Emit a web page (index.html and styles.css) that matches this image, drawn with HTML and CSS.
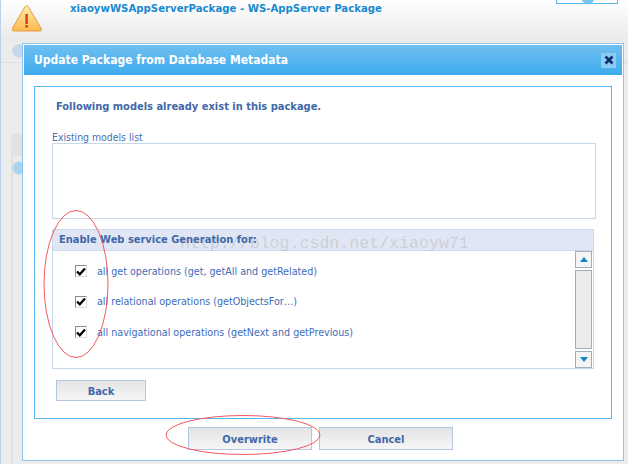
FILE: index.html
```html
<!DOCTYPE html>
<html>
<head>
<meta charset="utf-8">
<title>Update Package</title>
<link rel="stylesheet" href="styles.css">
</head>
<body>
<div class="page">
  <header class="top">
    <svg class="warn" width="30" height="28" viewBox="0 0 30 28"><defs><linearGradient id="w" x1="0" y1="0" x2="0" y2="1"><stop offset="0" stop-color="#fff0a8"/><stop offset="1" stop-color="#fbb84e"/></linearGradient></defs><path d="M13 1.5 Q14.5 -.3 16 1.5 L29 23.5 Q30 26 27.5 26 L1.5 26 Q-1 26 0 23.5 Z" transform="translate(.2 0)" fill="url(#w)" stroke="#e59a4c"/><rect x="13.4" y="9" width="2.4" height="10" fill="#d9342b"/><rect x="13.4" y="20" width="2.4" height="2.6" fill="#d9342b"/></svg>
    <div class="pkg">xiaoywWSAppServerPackage - WS-AppServer Package</div>
    <div class="topbox"><span class="topdot"></span></div>
  </header>
  <div class="bg-icon one"></div>
  <div class="bg-line"></div>
  <div class="bg-rule"></div>
  <div class="bg-band"></div>
  <div class="bg-icon two"></div>
  <section class="dialog">
    <div class="title"><span>Update Package from Database Metadata</span><span class="close"><svg width="10" height="10" viewBox="0 0 10 10"><path d="M1.5 1.5 L8.5 8.5 M8.5 1.5 L1.5 8.5" stroke="#0d2f6e" stroke-width="2.6"/></svg></span></div>
    <div class="body">
      <div class="panel">
        <p class="notice">Following models already exist in this package.</p>
        <label class="lbl">Existing models list</label>
        <div class="listbox"></div>
        <div class="fs">
          <div class="fshead">Enable Web service Generation for:</div>
          <div class="fsbody">
            <ul class="opts">
              <li><span class="cb"><svg width="10" height="9" viewBox="0 0 10 9"><path d="M1 4.5 L3.8 7.3 L9 1.5" fill="none" stroke="#000" stroke-width="2.2"/></svg></span>all get operations (get, getAll and getRelated)</li>
              <li><span class="cb"><svg width="10" height="9" viewBox="0 0 10 9"><path d="M1 4.5 L3.8 7.3 L9 1.5" fill="none" stroke="#000" stroke-width="2.2"/></svg></span>all relational operations (getObjectsFor…)</li>
              <li><span class="cb"><svg width="10" height="9" viewBox="0 0 10 9"><path d="M1 4.5 L3.8 7.3 L9 1.5" fill="none" stroke="#000" stroke-width="2.2"/></svg></span>all navigational operations (getNext and getPrevious)</li>
            </ul>
            <div class="sb">
              <div class="sbtn"><svg width="8" height="5" viewBox="0 0 8 5"><path d="M4 0 L8 5 L0 5 Z" fill="#1284c8"/></svg></div>
              <div class="track"></div>
              <div class="sbtn"><svg width="8" height="5" viewBox="0 0 8 5"><path d="M0 0 L8 0 L4 5 Z" fill="#1284c8"/></svg></div>
            </div>
          </div>
        </div>
        <button class="btn back">Back</button>
      </div>
      <div class="actions">
        <button class="btn main">Overwrite</button>
        <button class="btn main cancel">Cancel</button>
      </div>
    </div>
  </section>
  <div class="watermark">http://blog.csdn.net/xiaoyw71</div>
  <svg class="marks" width="628" height="464" viewBox="0 0 628 464"><ellipse cx="76" cy="284" rx="32" ry="73.5" fill="none" stroke="#f0595f"/><ellipse cx="243" cy="435" rx="77" ry="19.5" fill="none" stroke="#f0595f"/></svg>
</div>
</body>
</html>
```
FILE: styles.css
```css
* { box-sizing: border-box; }
html, body { margin: 0; padding: 0; }
body { font-family: "DejaVu Sans", sans-serif; font-stretch: condensed; background: #ececec; }
.page { position: relative; width: 628px; height: 464px; overflow: hidden; background: #ececec; border-left: 1px solid #b9d3ee; }
.top { height: 41px; background: linear-gradient(#ffffff, #e9e9e9); display: flex; position: relative; }
.warn { margin: 5px 0 0 11px; flex: none; }
.pkg { margin: 2px 0 0 28px; font-size: 11.3px; font-weight: bold; color: #1a8ad0; line-height: 14px; }
.topbox { position: absolute; left: 555px; top: -2px; width: 62px; height: 6px; border: 1px solid #5ab7ee; background: #fff; overflow: hidden; }
.topdot { position: absolute; left: 25px; top: 0; width: 12px; height: 4px; border-radius: 0 0 6px 6px; background: #7cc0f0; }
.bg-icon { position: absolute; left: 11px; width: 14px; height: 14px; border-radius: 50%; background: #c3d9ec; border: 1px solid #dcdcdc; }
.bg-icon.one { top: 44px; }
.bg-icon.two { top: 161px; background: #a9d4f2; }
.bg-line { position: absolute; left: 10px; top: 134px; bottom: 0; width: 2px; background: #e1e1e1; }
.bg-rule { position: absolute; left: 0; right: 0; top: 62px; height: 1px; background: #e0e0e0; }
.bg-band { position: absolute; left: 11px; top: 134px; width: 12px; height: 22px; background: #e2e2e2; }
.dialog { position: absolute; left: 21px; top: 43px; width: 602px; height: 418px; background: #fff; border: 1px solid #8fc4ee; padding: 1px; }
.title { height: 30px; background: linear-gradient(#70bfef, #3dabee); color: #fff; font-size: 12px; font-weight: bold; display: flex; align-items: center; justify-content: space-between; padding: 0 6px 0 10px; }
.close { width: 15px; height: 15px; background: #8cccf3; display: flex; align-items: center; justify-content: center; }
.body { padding: 11px 10px 0 10px; }
.panel { height: 333px; border: 1px solid #5ab7ee; padding: 13px 15px 0 17px; }
.notice { margin: 0 0 0 4px; font-size: 11px; font-weight: bold; color: #3f68a8; line-height: 14px; }
.lbl { display: block; margin: 18px 0 0 0; font-size: 10.4px; color: #4a6fb0; line-height: 11px; }
.listbox { height: 76px; width: 544px; border: 1px solid #c5d8ea; background: #fff; }
.fs { margin-top: 10px; width: 542px; }
.fshead { height: 22px; background: #e0e6f3; border: 1px solid #ccd9ea; padding-left: 6px; font-size: 11px; font-weight: bold; color: #3f68a8; line-height: 20px; }
.fsbody { height: 118px; border: 1px solid #c5d8ea; border-top: 0; display: flex; justify-content: space-between; }
.opts { list-style: none; margin: 0; padding: 5px 0 0 22px; }
.opts li { display: flex; align-items: center; height: 30.5px; font-size: 10.65px; color: #3e6cb8; }
.cb { width: 12px; height: 12px; margin-right: 10px; border: 1px solid #8a8a8a; border-right-color: #ddd; border-bottom-color: #ddd; background: #fff; display: flex; align-items: center; justify-content: center; }
.sb { width: 17px; display: flex; flex-direction: column; gap: 2px; margin-right: 1px; }
.sbtn { height: 17px; background: #f4f4f4; border: 1px solid #a3adb8; display: flex; align-items: center; justify-content: center; }
.track { flex: 1; background: #ebebeb; border: 1px solid #a3adb8; }
.btn { font-family: inherit; font-stretch: condensed; font-size: 11px; font-weight: bold; color: #3f68a8; border: 1px solid #b4c6e2; background: linear-gradient(#e4e4e4, #f6f6f6); padding: 2px 0 0 0; display: block; }
.back { margin: 11px 0 0 4px; width: 90px; height: 21px; }
.actions { display: flex; gap: 7px; margin: 8px 0 0 154px; }
.main { width: 124px; height: 23px; }
.cancel { width: 134px; }
.watermark { position: absolute; left: 179px; top: 235px; font-family: "Liberation Mono", monospace; font-stretch: normal; font-size: 16.6px; line-height: 18px; color: rgba(130,130,130,.24); }
.marks { position: absolute; left: -1px; top: 0; }
```
